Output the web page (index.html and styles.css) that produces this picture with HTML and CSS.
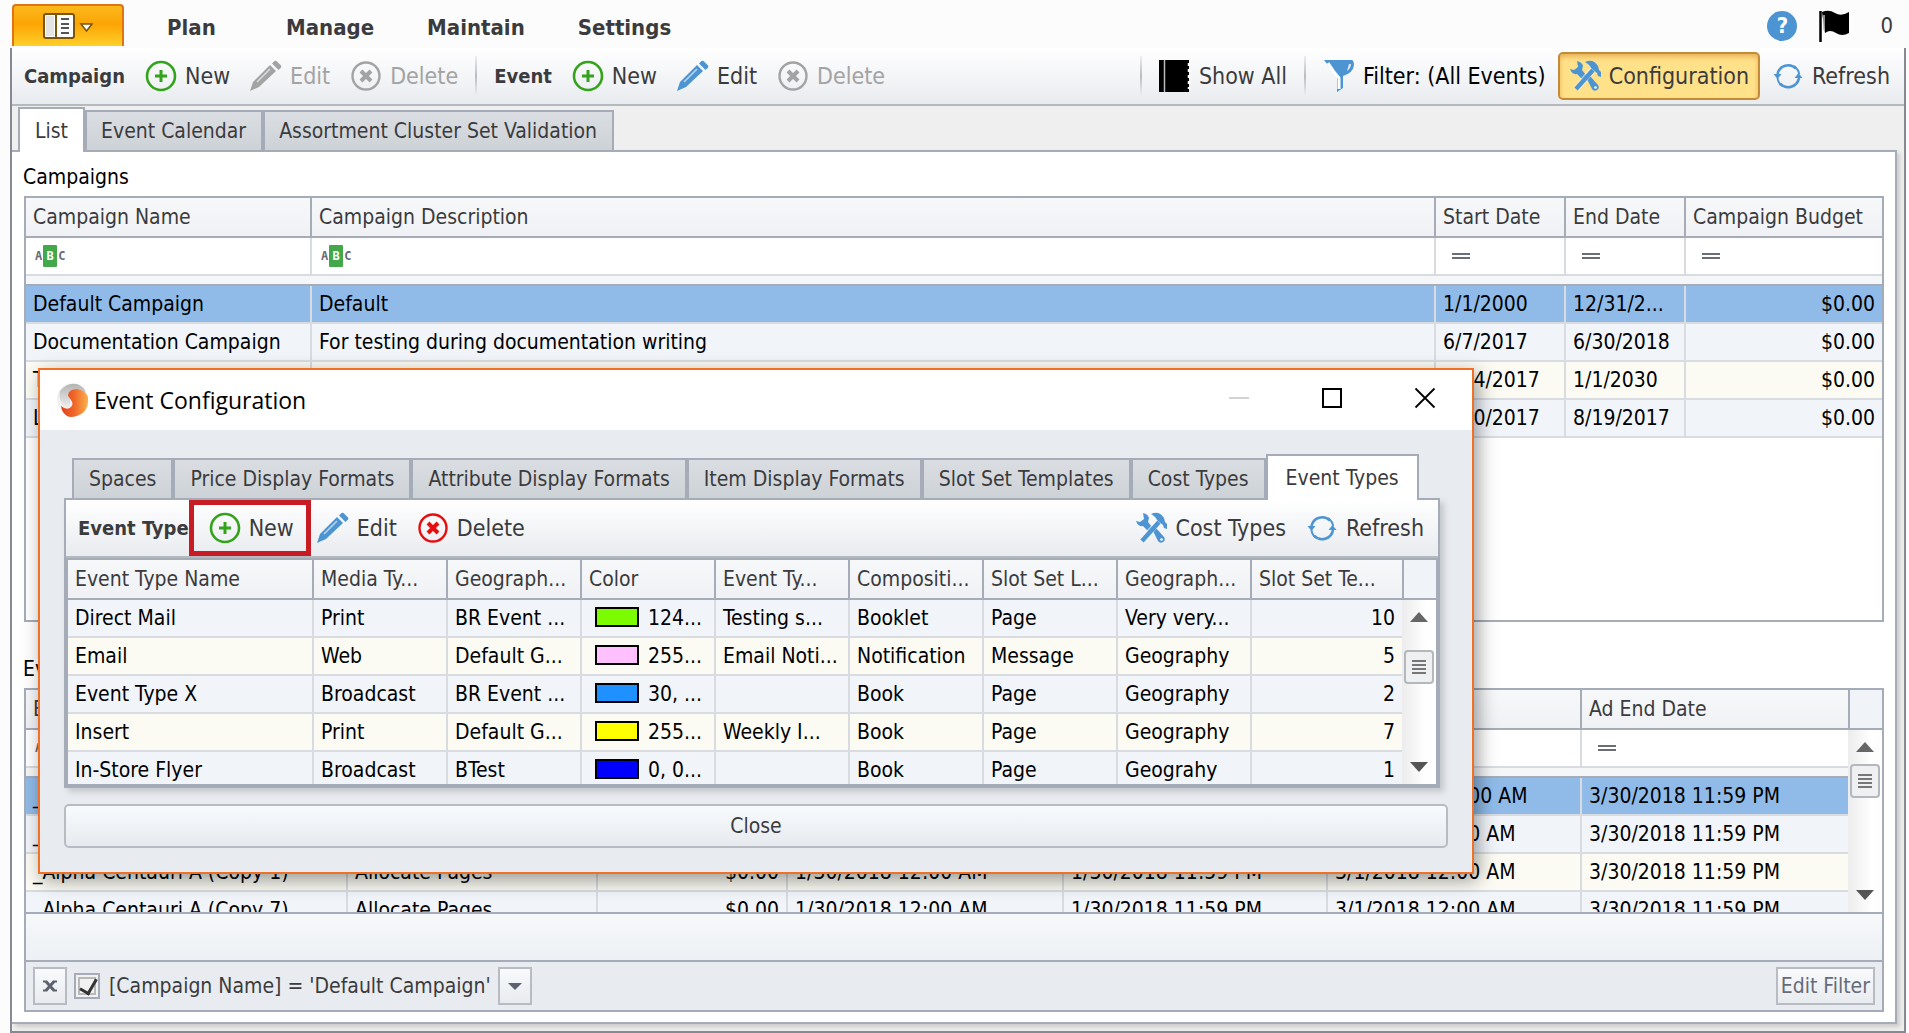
FILE: index.html
```html
<!DOCTYPE html>
<html lang="en">
<head>
<meta charset="utf-8">
<title>Event Configuration</title>
<link rel="stylesheet" href="styles.css">
</head>
<body>
<svg class="sprite" aria-hidden="true">
  <defs>
    <linearGradient id="logoGrey" x1="0" y1="0" x2="0" y2="1"><stop offset="0" stop-color="#b4b4b4"/><stop offset="1" stop-color="#efefef"/></linearGradient>
    <linearGradient id="logoOrange" x1="0" y1="0" x2="1" y2="0"><stop offset="0" stop-color="#e2401c"/><stop offset="0.5" stop-color="#f0682a"/><stop offset="1" stop-color="#fbb24c"/></linearGradient>
  </defs>
  <symbol id="i-add" viewBox="0 0 32 32"><circle cx="16" cy="16" r="14" fill="none" stroke="currentColor" stroke-width="2.6"/><path d="M16 10v12M10 16h12" stroke="currentColor" stroke-width="3"/></symbol>
  <symbol id="i-del" viewBox="0 0 32 32"><circle cx="16" cy="16" r="13.5" fill="none" stroke="currentColor" stroke-width="2.4"/><path d="M11 11l10 10M21 11L11 21" stroke="currentColor" stroke-width="4"/></symbol>
  <symbol id="i-pen" viewBox="0 0 32 32"><path d="M0 31l3-9L20 5l6 6L9 27z" fill="currentColor"/><path d="M7 22L20 9" stroke="#fff" stroke-width="1.600" opacity=".6"/><path d="M22 3.500l2.500-2.500q1-.5 2 0l4.500 4.500q.5 1 0 2L28.500 10z" fill="currentColor"/></symbol>
  <symbol id="i-tools" viewBox="0 0 32 32"><path d="M18 19l3-3 8 9q2 3-1 5t-5-1z" fill="currentColor"/><circle cx="26.500" cy="27.500" r="1.300" fill="#fff"/><path d="M8 1q5 1 6 5l-1 4 4 5-4 4-5-5q-5 1-7-5l4 1 4-3z" fill="currentColor"/><path d="M24 9L7 29" stroke="#fff" stroke-width="6.500" opacity=".55"/><path d="M24 10L7 29" stroke="currentColor" stroke-width="4.500"/><path d="M16 2q8-4 13 4l1 4 2 2v5l-3-1-1-3-6-5q-1-3-6-6z" fill="currentColor"/></symbol>
  <symbol id="i-refresh" viewBox="0 0 32 32"><path d="M5.500 14A11 11 0 0 1 24 8.500M27 18A11 11 0 0 1 8 23.500" fill="none" stroke="currentColor" stroke-width="2.600"/><path d="M1.500 14h8l-4 5zM22.500 18h8l-4-5z" fill="currentColor"/><path d="M22 6q5 4 5 8M10 26q-4-3-4.500-8" fill="none" stroke="currentColor" stroke-width="2"/></symbol>
  <symbol id="i-filter" viewBox="0 0 32 32"><path d="M1 0h28q2 1 2 5-1 8-11 11v12l-6 4V17z" fill="currentColor"/><path d="M5 3l6 9 5 6v11" fill="none" stroke="#fff" stroke-width="3"/><path d="M26 4h2q0 4-4 7z" fill="#fff" opacity=".8"/></symbol>
  <symbol id="i-book" viewBox="0 0 32 32"><path d="M0 0h30v32H0z" fill="#000"/><path d="M5.500 0v32" stroke="#bbb" stroke-width="1.500"/><path d="M30 3v26" stroke="#fff" stroke-width="2.500" stroke-dasharray="3 3"/></symbol>
</svg>

<header class="topbar">
  <button class="app-button" aria-label="Application menu">
    <svg width="50" height="26" viewBox="0 0 50 26" aria-hidden="true"><rect x="1" y="1" width="30" height="24" rx="2" fill="#fff" stroke="#7a5408" stroke-width="2"/><path d="M3 3h8v20H3z" fill="#e4e4e6"/><path d="M13 1v24" stroke="#7a5408" stroke-width="2"/><path d="M18 6h8M18 11h8M18 15h8M18 20h8" stroke="#555" stroke-width="2"/><path d="M38 11h11l-5.500 7z" fill="#fff" stroke="#7a5408" stroke-width="1.500"/></svg>
  </button>
  <nav class="menu">
    <a href="#plan">Plan</a><a href="#manage">Manage</a><a href="#maintain">Maintain</a><a href="#settings">Settings</a>
  </nav>
  <div class="status">
    <button class="help" aria-label="Help">?</button>
    <svg width="31" height="33" viewBox="0 0 31 33" aria-hidden="true"><path d="M1.500 1v31" stroke="#000" stroke-width="2.500"/><path d="M3 2q7-3 13 1t14-1v21q-7 4-13 0t-11 0z" fill="#000"/><path d="M5 5v15" stroke="#bbb" stroke-width="1.500"/></svg>
    <span>0</span>
  </div>
</header>

<main class="frame">
  <div class="toolbar">
    <strong>Campaign</strong>
    <button class="tool"><svg class="green"><use href="#i-add"/></svg>New</button>
    <button class="tool" disabled><svg><use href="#i-pen"/></svg>Edit</button>
    <button class="tool" disabled><svg><use href="#i-del"/></svg>Delete</button>
    <span class="sep"></span>
    <strong>Event</strong>
    <button class="tool"><svg class="green"><use href="#i-add"/></svg>New</button>
    <button class="tool"><svg><use href="#i-pen"/></svg>Edit</button>
    <button class="tool" disabled><svg><use href="#i-del"/></svg>Delete</button>
    <span class="spacer"></span>
    <span class="sep"></span>
    <button class="tool"><svg><use href="#i-book"/></svg>Show All</button>
    <span class="sep"></span>
    <button class="tool dark"><svg><use href="#i-filter"/></svg>Filter: (All Events)</button>
    <button class="tool active"><svg><use href="#i-tools"/></svg>Configuration</button>
    <button class="tool"><svg><use href="#i-refresh"/></svg>Refresh</button>
  </div>

  <div class="tabs">
    <button class="tab current">List</button><button class="tab">Event Calendar</button><button class="tab">Assortment Cluster Set Validation</button>
  </div>

  <div class="panel">
    <h2>Campaigns</h2>
    <section class="grid campaigns">
      <table>
        <colgroup><col class="w286"><col><col class="w130"><col class="w120"><col class="w196"></colgroup>
        <thead>
          <tr><th>Campaign Name</th><th>Campaign Description</th><th>Start Date</th><th>End Date</th><th>Campaign Budget</th></tr>
          <tr class="filter"><td><span class="abc">A<b>B</b>C</span></td><td><span class="abc">A<b>B</b>C</span></td><td><i class="eq"></i></td><td><i class="eq"></i></td><td><i class="eq"></i></td></tr>
          <tr class="strip"><td colspan="5"></td></tr>
        </thead>
        <tbody>
          <tr class="selected"><td>Default Campaign</td><td>Default</td><td>1/1/2000</td><td>12/31/2...</td><td class="num">$0.00</td></tr>
          <tr><td>Documentation Campaign</td><td>For testing during documentation writing</td><td>6/7/2017</td><td>6/30/2018</td><td class="num">$0.00</td></tr>
          <tr><td>T</td><td></td><td>3/14/2017</td><td>1/1/2030</td><td class="num">$0.00</td></tr>
          <tr><td>L</td><td></td><td>7/30/2017</td><td>8/19/2017</td><td class="num">$0.00</td></tr>
        </tbody>
      </table>
    </section>

    <h2 class="events-title">Events</h2>
    <section class="grid">
      <div class="view events">
        <table>
          <colgroup><col class="w322"><col class="w250"><col class="w190"><col class="w276"><col class="w264"><col class="w254"><col></colgroup>
          <thead>
            <tr><th>Event Name</th><th></th><th></th><th></th><th></th><th></th><th>Ad End Date</th></tr>
            <tr class="filter"><td><span class="abc">A<b>B</b>C</span></td><td></td><td></td><td></td><td></td><td></td><td><i class="eq"></i></td></tr>
            <tr class="strip"><td colspan="7"></td></tr>
          </thead>
          <tbody>
            <tr class="selected"><td>_</td><td></td><td></td><td></td><td></td><td>3/10/2018 12:00 AM</td><td>3/30/2018 11:59 PM</td></tr>
            <tr><td>_</td><td></td><td></td><td></td><td></td><td>3/1/2018 12:00 AM</td><td>3/30/2018 11:59 PM</td></tr>
            <tr><td>_Alpha Centauri A (Copy 1)</td><td>Allocate Pages</td><td class="num">$0.00</td><td>1/30/2018 12:00 AM</td><td>1/30/2018 11:59 PM</td><td>3/1/2018 12:00 AM</td><td>3/30/2018 11:59 PM</td></tr>
            <tr><td>_Alpha Centauri A (Copy 7)</td><td>Allocate Pages</td><td class="num">$0.00</td><td>1/30/2018 12:00 AM</td><td>1/30/2018 11:59 PM</td><td>3/1/2018 12:00 AM</td><td>3/30/2018 11:59 PM</td></tr>
          </tbody>
        </table>
        <div class="scroll"><div class="corner"></div><div class="track"><i class="up"></i><i class="thumb near"></i><i class="down"></i></div></div>
      </div>
      <div class="summary"></div>
      <div class="filterbar">
        <button class="mini" aria-label="Clear filter"><svg width="16" height="14" viewBox="0 0 16 14"><path d="M1 2.500h4M11 2.500h4M1 11.500h4M11 11.500h4" stroke="#5c636e" stroke-width="2"/><path d="M4 2.500l8 9M12 2.500l-8 9" fill="none" stroke="#5c636e" stroke-width="3"/></svg></button>
        <label><input type="checkbox" checked>[Campaign Name] = 'Default Campaign'</label>
        <button class="mini" aria-label="Recent filters"><i class="down"></i></button>
        <span class="spacer"></span>
        <button class="edit-filter">Edit Filter</button>
      </div>
    </section>
  </div>
</main>

<div class="window" role="dialog" aria-labelledby="window-title">
  <div class="titlebar">
    <svg width="32" height="34" viewBox="0 0 32 34" aria-hidden="true"><ellipse cx="15" cy="16" rx="15" ry="15.500" fill="#f0f0f0"/><path d="M3 8Q10-1 20 1q8 3 9 9-6-4-13-2-6 3-3 9 1 6-4 8Q1 18 3 8z" fill="url(#logoGrey)"/><path d="M11 12q1-6 9-6 8 1 11 8 1 9-4 15-6 5-14 5-8-2-9-11 6 5 10 1 3-3 0-7t-3-5z" fill="url(#logoOrange)"/></svg>
    <span id="window-title">Event Configuration</span>
    <span class="spacer"></span>
    <button aria-label="Minimize" disabled><svg width="22" height="22" viewBox="0 0 22 22"><path d="M1 11h20" stroke="#c4c4c4" stroke-width="1.500"/></svg></button>
    <button aria-label="Maximize"><svg width="22" height="22" viewBox="0 0 22 22"><rect x="2" y="2" width="18" height="18" fill="none" stroke="#000" stroke-width="2"/></svg></button>
    <button aria-label="Close window"><svg width="22" height="22" viewBox="0 0 22 22"><path d="M1.500 1.500l19 19M20.500 1.500l-19 19" stroke="#000" stroke-width="1.800"/></svg></button>
  </div>
  <div class="window-body">
    <div class="tabs">
      <button class="tab">Spaces</button><button class="tab">Price Display Formats</button><button class="tab">Attribute Display Formats</button><button class="tab">Item Display Formats</button><button class="tab">Slot Set Templates</button><button class="tab">Cost Types</button><button class="tab current">Event Types</button>
    </div>
    <div class="subpanel">
      <div class="toolbar">
        <strong>Event Type</strong>
        <button class="tool marked"><svg class="green"><use href="#i-add"/></svg>New</button>
        <button class="tool"><svg><use href="#i-pen"/></svg>Edit</button>
        <button class="tool"><svg class="red"><use href="#i-del"/></svg>Delete</button>
        <span class="spacer"></span>
        <button class="tool"><svg><use href="#i-tools"/></svg>Cost Types</button>
        <button class="tool"><svg><use href="#i-refresh"/></svg>Refresh</button>
      </div>
      <div class="view types">
        <table>
          <colgroup><col><col class="w134"><col class="w134"><col class="w134"><col class="w134"><col class="w134"><col class="w134"><col class="w134"><col class="w150"></colgroup>
          <thead>
            <tr><th>Event Type Name</th><th>Media Ty...</th><th>Geograph...</th><th>Color</th><th>Event Ty...</th><th>Compositi...</th><th>Slot Set L...</th><th>Geograph...</th><th>Slot Set Te...</th></tr>
          </thead>
          <tbody>
            <tr><td>Direct Mail</td><td>Print</td><td>BR Event ...</td><td><i class="swatch lawn"></i>124...</td><td>Testing s...</td><td>Booklet</td><td>Page</td><td>Very very...</td><td class="num">10</td></tr>
            <tr><td>Email</td><td>Web</td><td>Default G...</td><td><i class="swatch pink"></i>255...</td><td>Email Noti...</td><td>Notification</td><td>Message</td><td>Geography</td><td class="num">5</td></tr>
            <tr><td>Event Type X</td><td>Broadcast</td><td>BR Event ...</td><td><i class="swatch azure"></i>30, ...</td><td></td><td>Book</td><td>Page</td><td>Geography</td><td class="num">2</td></tr>
            <tr><td>Insert</td><td>Print</td><td>Default G...</td><td><i class="swatch yellow"></i>255...</td><td>Weekly I...</td><td>Book</td><td>Page</td><td>Geography</td><td class="num">7</td></tr>
            <tr><td>In-Store Flyer</td><td>Broadcast</td><td>BTest</td><td><i class="swatch blue"></i>0, 0...</td><td></td><td>Book</td><td>Page</td><td>Geograhy</td><td class="num">1</td></tr>
          </tbody>
        </table>
        <div class="scroll"><div class="corner"></div><div class="track"><i class="up"></i><i class="thumb"></i><i class="down"></i></div></div>
      </div>
    </div>
    <button class="close">Close</button>
  </div>
</div>
</body>
</html>
```
FILE: styles.css
```css
* { box-sizing: border-box; }

:root {
  --line: #a5acb8;
  --soft: #d8dce1;
  --ink: #3b3b3d;
  --blue: #4d94d3;
}

body {
  margin: 0;
  height: 100vh;
  display: flex;
  flex-direction: column;
  padding: 0 3px 0 10px;
  background: #fcfcfc;
  color: #000;
  font: 21px/26px "DejaVu Sans Condensed", "DejaVu Sans", sans-serif;
  position: relative;
}

button {
  font: inherit;
  color: inherit;
  background: none;
  border: 0;
  padding: 0;
  margin: 0;
}

h2 { margin: 0; font-size: 21px; line-height: 26px; font-weight: normal; }

.sprite { position: absolute; width: 0; height: 0; }
.spacer { flex: 1; }

/* Top menu */
.topbar { height: 48px; display: flex; align-items: center; padding: 0 13px 0 2px; }
.app-button {
  align-self: flex-start;
  margin-top: 4px;
  width: 112px;
  height: 42px;
  display: flex;
  align-items: center;
  justify-content: center;
  border: 2px solid #e07414;
  border-bottom: 0;
  border-radius: 4px 4px 0 0;
  background: linear-gradient(#fbb91c, #fca404 45%, #ffd02a);
}
.menu { display: flex; gap: 53px; margin: 8px 0 0 43px; }
.menu a { min-width: 66px; color: var(--ink); font-size: 22px; font-weight: bold; text-decoration: none; }
.status { margin-left: auto; display: flex; align-items: center; gap: 22px; margin-top: 4px; font-size: 22px; color: var(--ink); }
.status span { margin-left: 8px; }
.help {
  width: 30px;
  height: 30px;
  border-radius: 50%;
  background: var(--blue);
  color: #fff;
  font-weight: bold;
}

/* Main frame */
.frame {
  flex: 1;
  min-height: 0;
  display: flex;
  flex-direction: column;
  border: 2px solid #858992;
  border-top: 0;
  background: #efefef;
}

.toolbar {
  height: 58px;
  flex: none;
  display: flex;
  align-items: center;
  gap: 20px;
  padding: 0 14px 0 12px;
  border-bottom: 2px solid #b4b9be;
  background: linear-gradient(#fff, #e8ebef);
  color: var(--ink);
}
.toolbar strong { font-size: 20px; }
.tool { display: flex; align-items: center; gap: 8px; font-size: 23px; white-space: nowrap; }
.tool svg { width: 32px; height: 32px; color: var(--blue); }
.tool .green { color: #34a31c; }
.tool .red { color: #e60f0f; }
.tool:disabled, .tool:disabled svg { color: #a3a3a3; }
.tool.dark { color: #000; }
.tool.active {
  height: 48px;
  margin: 0 -8px;
  padding: 0 9px;
  border: 2px solid #c48a34;
  border-radius: 5px;
  background: #ffe18a;
  box-shadow: inset 0 3px 5px #e8b45a;
}
.tool.marked {
  align-self: stretch;
  margin: 0 -14px 0 -20px;
  padding: 0 12px 0 15px;
  border: 5px solid #c81c24;
}
.sep { width: 2px; height: 40px; margin: 0 -3px; background: linear-gradient(#eee, #b8bcc2, #eee); }

/* Tabs */
.tabs { display: flex; align-items: flex-end; position: relative; z-index: 1; margin-bottom: -2px; padding: 1px 0 0 6px; }
.tab {
  height: 42px;
  padding: 0 15px 0 14px;
  border: 2px solid var(--line);
  color: var(--ink);
  background: linear-gradient(#dadee3, #cdd2d7);
  white-space: nowrap;
}
.tab.current { height: 45px; padding: 0 15px; border-bottom: 0; background: #fff; }

.panel {
  flex: 1;
  min-height: 0;
  display: flex;
  flex-direction: column;
  margin: 0 7px 7px 0;
  padding: 12px 11px 10px 11px;
  border: 2px solid var(--line);
  border-left: 0;
  background: #fff;
  box-shadow: 3px 3px 4px #ccc;
}
.events-title { margin-top: 34px; margin-bottom: 6px; }

/* Grids */
.grid { border: 2px solid var(--line); margin-left: 1px; }
.campaigns { flex: 1; min-height: 0; margin-top: 6px; overflow: hidden; }
table { width: 100%; table-layout: fixed; border-collapse: separate; border-spacing: 0; }
th, td {
  height: 38px;
  padding: 0 7px;
  border-right: 2px solid var(--soft);
  border-bottom: 2px solid var(--soft);
  overflow: hidden;
  white-space: nowrap;
  text-overflow: ellipsis;
  text-align: left;
}
th {
  height: 40px;
  font-weight: normal;
  color: var(--ink);
  background: linear-gradient(#f6f8fa, #eff1f4);
  border-color: var(--line);
}
th:last-child, td:last-child { border-right: 0; }
.strip td { height: 10px; padding: 0; background: #f5f6f8; border-color: var(--line); }
.filter td { background: #fff; line-height: 20px; }
tbody tr:nth-child(even) { background: #f1f5fa; }
tbody tr:nth-child(odd) { background: #fbfbf3; }
tbody tr.selected { background: #90bbe9; }
.types tbody tr:nth-child(odd) { background: #f1f5fa; }
.types tbody tr:nth-child(even) { background: #fbfbf3; }
.num { text-align: right; }

.w120 { width: 120px; }
.w130 { width: 130px; }
.w134 { width: 134px; }
.w150 { width: 150px; }
.w190 { width: 190px; }
.w196 { width: 196px; }
.w250 { width: 250px; }
.w254 { width: 254px; }
.w264 { width: 264px; }
.w276 { width: 276px; }
.w286 { width: 286px; }
.w322 { width: 322px; }

.abc { display: flex; align-items: center; gap: 1px; padding-left: 2px; font: bold 12px/22px "DejaVu Sans Mono", monospace; color: #666b73; }
.abc b { width: 14px; border-radius: 1px; background: #43a849; color: #fff; text-align: center; }
.eq { display: block; width: 18px; height: 6px; margin-left: 9px; border: solid #6a6e76; border-width: 2px 0; }

.view { display: flex; overflow: hidden; }
.view table { flex: 1; width: 0; height: max-content; }
.events { height: 222px; }
.types { height: 228px; }
.scroll { width: 34px; flex: none; display: flex; flex-direction: column; }
.corner { height: 40px; flex: none; border-left: 2px solid var(--line); border-bottom: 2px solid var(--line); background: #f0f3f7; }
.track { flex: 1; display: flex; flex-direction: column; align-items: center; padding: 12px 2px; background: linear-gradient(90deg, #ececec, #fff 70%); }
.up, .down { width: 0; height: 0; border: 9px solid transparent; }
.up { border-top: 0; border-bottom: 10px solid #666; }
.down { border-bottom: 0; border-top: 10px solid #555; }
.track .down { margin-top: auto; }
.thumb {
  width: 30px;
  height: 34px;
  margin-top: 28px;
  border: 2px solid #b4b7bb;
  border-radius: 4px;
  background:
    repeating-linear-gradient(#777 0 2px, transparent 2px 4px) center / 14px 14px no-repeat,
    #eef0f1;
}
.thumb.near { margin-top: 12px; }

.summary { height: 50px; border: solid var(--line); border-width: 2px 0; background: linear-gradient(#f6f8fa, #edf0f4); }
.filterbar { height: 48px; display: flex; align-items: center; gap: 7px; padding: 0 7px; background: #e8ebf0; color: var(--ink); }
.filterbar label { display: flex; align-items: center; gap: 9px; }
.mini {
  width: 34px;
  height: 38px;
  display: flex;
  align-items: center;
  justify-content: center;
  border: 2px solid #b8bcc2;
  background: linear-gradient(#f8fafc, #e8ebef);
}
.mini .down { border-width: 7px 7px 0; border-top-color: #5c636e; }
.edit-filter { height: 38px; padding: 0 3px; border: 2px solid #b8bcc2; background: linear-gradient(#f8fafc, #e8ebef); color: #666b78; }
input[type="checkbox"] {
  appearance: none;
  width: 26px;
  height: 26px;
  margin: 0;
  border: 2px solid var(--line);
  outline: 2px solid #b9b9bb;
  outline-offset: -6px;
  background: #f2f2f3;
  position: relative;
}
input[type="checkbox"]:checked::after {
  content: "";
  position: absolute;
  left: 7px;
  top: 1px;
  width: 8px;
  height: 15px;
  border: solid #333;
  border-width: 0 3px 3px 0;
  transform: rotate(30deg);
}

/* Floating window */
.window {
  position: absolute;
  left: 38px;
  right: 435px;
  top: 368px;
  z-index: 5;
  border: 2px solid #f07025;
  background: #e8ebf0;
  box-shadow: 4px 6px 18px rgba(0, 0, 0, .4);
}
.titlebar {
  height: 60px;
  display: flex;
  align-items: center;
  gap: 5px;
  padding: 0 36px 0 17px;
  background: #fff;
  font: 23px/28px "Open Sans", "Noto Sans", sans-serif;
}
.titlebar button { display: flex; margin: -4px 0 0 66px; }
.titlebar svg { display: block; }
.window-body { padding: 24px; }
.window .tabs { padding: 0 0 0 8px; }
.window .tab { min-width: 100px; padding: 0 15px; }
.window .tab.current { height: 46px; padding: 0 18px; }
.subpanel {
  margin-right: 8px;
  border: 2px solid var(--line);
  box-shadow: 4px 4px 6px #c4c8ce;
}
.types { border: 2px solid var(--line); }
.swatch { display: inline-block; width: 44px; height: 20px; margin: 0 9px 0 6px; border: 2px solid #000; vertical-align: -2px; }
.lawn { background: #7cfc00; }
.pink { background: #ffc0ff; }
.azure { background: #1e90ff; }
.yellow { background: #ff0; }
.blue { background: #00f; }
.close {
  display: block;
  width: 100%;
  height: 44px;
  margin-top: 16px;
  border: 2px solid #b8bcc2;
  border-radius: 5px;
  background: linear-gradient(#f8fbfe, #e6eaee);
  color: var(--ink);
}
```
